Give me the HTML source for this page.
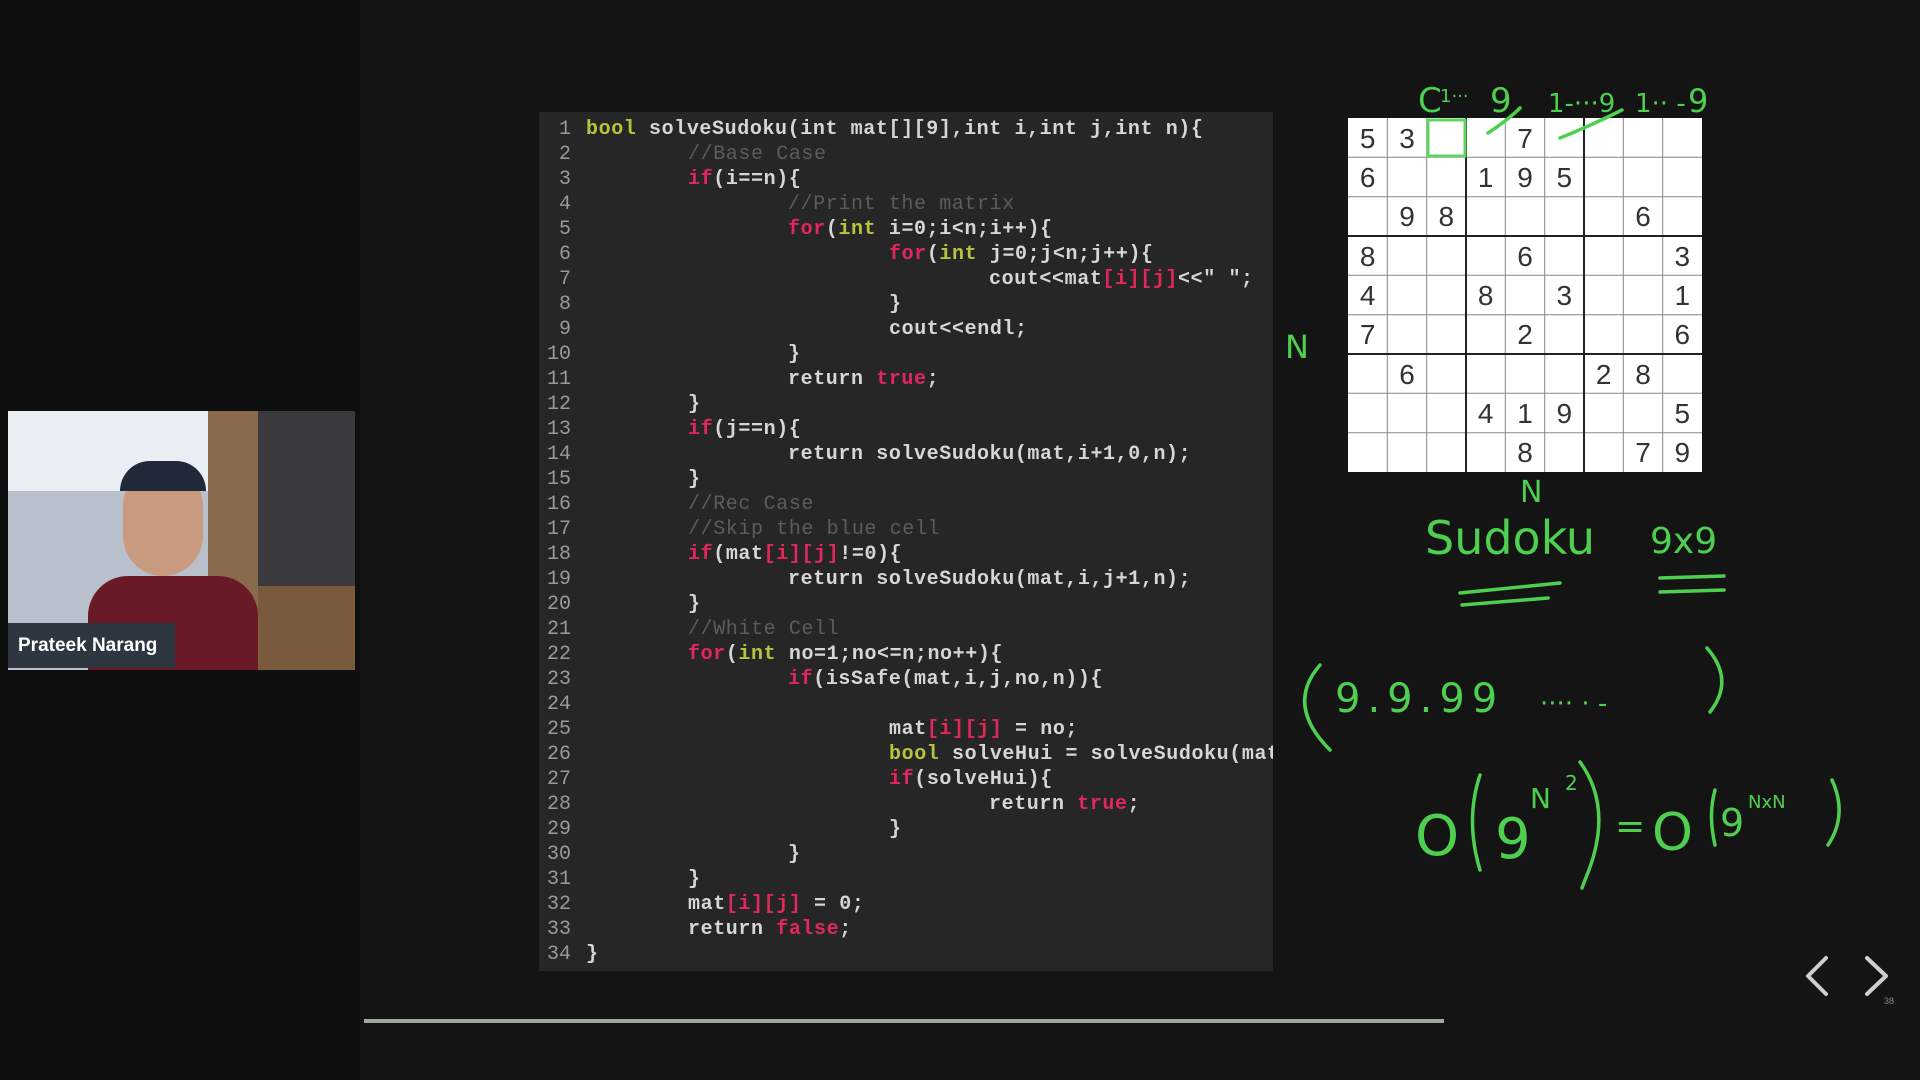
<!DOCTYPE html>
<html><head><meta charset="utf-8"><style>
body{margin:0;width:1920px;height:1080px;background:#141414;position:relative;overflow:hidden;font-family:"Liberation Sans",sans-serif}
.panel{position:absolute;left:539px;top:112px;width:734px;height:859px;background:#262626;overflow:hidden}
.code{position:absolute;left:0;top:5px;font-family:"Liberation Mono",monospace;font-size:20px;font-weight:bold;color:#d6d6d6;white-space:pre;line-height:25px;letter-spacing:0.6px}
.ln{display:inline-block;width:32px;text-align:right;color:#9a9a9a;font-weight:normal;margin-right:15px;letter-spacing:0}
.k{color:#e2275d}.t{color:#b8c43c}.c{color:#5c5c5c;font-weight:normal}
.i1{padding-left:102px}.i2{padding-left:202px}.i3{padding-left:303px}.i4{padding-left:403px}
.grid{position:absolute;left:1348px;top:118px;width:354px;height:354px;background:#fff}
.cam{position:absolute;left:8px;top:411px;width:347px;height:259px;overflow:hidden;background:#6b6e76}
.g{fill:#4fcf4f;font-family:"DejaVu Sans",sans-serif}
</style></head><body>
<div style="position:absolute;left:0;top:0;width:360px;height:1080px;background:#0f0f0f"></div>
<div class="panel"><div class="code"><span class="ln">1</span><span class="t">bool</span> solveSudoku(int mat[][9],int i,int j,int n){
<span class="ln">2</span><span class="i1 c">//Base Case</span>
<span class="ln">3</span><span class="i1"><span class="k">if</span>(i==n){</span>
<span class="ln">4</span><span class="i2 c">//Print the matrix</span>
<span class="ln">5</span><span class="i2"><span class="k">for</span>(<span class="t">int</span> i=0;i&lt;n;i++){</span>
<span class="ln">6</span><span class="i3"><span class="k">for</span>(<span class="t">int</span> j=0;j&lt;n;j++){</span>
<span class="ln">7</span><span class="i4">cout&lt;&lt;mat<span class="k">[i][j]</span>&lt;&lt;" ";</span>
<span class="ln">8</span><span class="i3">}</span>
<span class="ln">9</span><span class="i3">cout&lt;&lt;endl;</span>
<span class="ln">10</span><span class="i2">}</span>
<span class="ln">11</span><span class="i2">return <span class="k">true</span>;</span>
<span class="ln">12</span><span class="i1">}</span>
<span class="ln">13</span><span class="i1"><span class="k">if</span>(j==n){</span>
<span class="ln">14</span><span class="i2">return solveSudoku(mat,i+1,0,n);</span>
<span class="ln">15</span><span class="i1">}</span>
<span class="ln">16</span><span class="i1 c">//Rec Case</span>
<span class="ln">17</span><span class="i1 c">//Skip the blue cell</span>
<span class="ln">18</span><span class="i1"><span class="k">if</span>(mat<span class="k">[i][j]</span>!=0){</span>
<span class="ln">19</span><span class="i2">return solveSudoku(mat,i,j+1,n);</span>
<span class="ln">20</span><span class="i1">}</span>
<span class="ln">21</span><span class="i1 c">//White Cell</span>
<span class="ln">22</span><span class="i1"><span class="k">for</span>(<span class="t">int</span> no=1;no&lt;=n;no++){</span>
<span class="ln">23</span><span class="i2"><span class="k">if</span>(isSafe(mat,i,j,no,n)){</span>
<span class="ln">24</span>
<span class="ln">25</span><span class="i3">mat<span class="k">[i][j]</span> = no;</span>
<span class="ln">26</span><span class="i3"><span class="t">bool</span> solveHui = solveSudoku(mat,i,j+1,n);</span>
<span class="ln">27</span><span class="i3"><span class="k">if</span>(solveHui){</span>
<span class="ln">28</span><span class="i4">return <span class="k">true</span>;</span>
<span class="ln">29</span><span class="i3">}</span>
<span class="ln">30</span><span class="i2">}</span>
<span class="ln">31</span><span class="i1">}</span>
<span class="ln">32</span><span class="i1">mat<span class="k">[i][j]</span> = 0;</span>
<span class="ln">33</span><span class="i1">return <span class="k">false</span>;</span>
<span class="ln">34</span>}</div></div>

<svg class="grid" viewBox="0 0 354 354" width="354" height="354">
<g stroke="#888" stroke-width="1">
<line x1="39.3" y1="0" x2="39.3" y2="354"/><line x1="78.7" y1="0" x2="78.7" y2="354"/><line x1="157.3" y1="0" x2="157.3" y2="354"/><line x1="196.7" y1="0" x2="196.7" y2="354"/><line x1="275.3" y1="0" x2="275.3" y2="354"/><line x1="314.7" y1="0" x2="314.7" y2="354"/>
<line y1="39.3" x1="0" y2="39.3" x2="354"/><line y1="78.7" x1="0" y2="78.7" x2="354"/><line y1="157.3" x1="0" y2="157.3" x2="354"/><line y1="196.7" x1="0" y2="196.7" x2="354"/><line y1="275.3" x1="0" y2="275.3" x2="354"/><line y1="314.7" x1="0" y2="314.7" x2="354"/>
</g>
<g stroke="#222" stroke-width="2">
<line x1="118" y1="0" x2="118" y2="354"/><line x1="236" y1="0" x2="236" y2="354"/><line y1="118" x1="0" y2="118" x2="354"/><line y1="236" x1="0" y2="236" x2="354"/>
</g>
<rect x="80" y="2" width="37" height="36" fill="none" stroke="#5fd45f" stroke-width="3"/>
<g font-family="Liberation Sans,sans-serif" font-size="28" fill="#333" text-anchor="middle">
<text x="19.7" y="30">5</text><text x="59" y="30">3</text><text x="177" y="30">7</text>
<text x="19.7" y="69">6</text><text x="137.7" y="69">1</text><text x="177" y="69">9</text><text x="216.3" y="69">5</text>
<text x="59" y="108">9</text><text x="98.3" y="108">8</text><text x="295" y="108">6</text>
<text x="19.7" y="148">8</text><text x="177" y="148">6</text><text x="334.3" y="148">3</text>
<text x="19.7" y="187">4</text><text x="137.7" y="187">8</text><text x="216.3" y="187">3</text><text x="334.3" y="187">1</text>
<text x="19.7" y="226">7</text><text x="177" y="226">2</text><text x="334.3" y="226">6</text>
<text x="59" y="266">6</text><text x="255.7" y="266">2</text><text x="295" y="266">8</text>
<text x="137.7" y="305">4</text><text x="177" y="305">1</text><text x="216.3" y="305">9</text><text x="334.3" y="305">5</text>
<text x="177" y="344">8</text><text x="295" y="344">7</text><text x="334.3" y="344">9</text>
</g>
</svg>

<svg style="position:absolute;left:0;top:0" width="1920" height="1080">
<g class="g">
<text x="1418" y="112" font-size="34">C</text>
<text x="1440" y="102" font-size="18">1···</text>
<text x="1490" y="112" font-size="34">9</text>
<text x="1548" y="112" font-size="26">1-···9</text>
<text x="1635" y="112" font-size="26">1·· -</text>
<text x="1688" y="112" font-size="32">9</text>
<text x="1285" y="358" font-size="32">N</text>
<text x="1520" y="502" font-size="30">N</text>
<text x="1425" y="554" font-size="46">Sudoku</text>
<text x="1650" y="553" font-size="36">9x9</text>
<text x="1335" y="712" font-size="40" letter-spacing="7">9.9.99</text>
<text x="1540" y="712" font-size="26">····  ·  -</text>
<text x="1415" y="855" font-size="56">O</text>
<text x="1495" y="858" font-size="56">9</text>
<text x="1530" y="808" font-size="28">N</text>
<text x="1565" y="790" font-size="20">2</text>
<text x="1615" y="838" font-size="36">=</text>
<text x="1652" y="850" font-size="52">O</text>
<text x="1720" y="836" font-size="38">9</text>
<text x="1748" y="808" font-size="18">NxN</text>
</g>
<g fill="none" stroke="#4fcf4f" stroke-width="3.5" stroke-linecap="round">
<path d="M1460 593 L1560 583 M1462 605 L1548 598"/>
<path d="M1660 578 L1724 576 M1660 592 L1724 590"/>
<path d="M1320 665 Q1285 705 1330 750"/>
<path d="M1707 648 Q1735 680 1710 712"/>
<path d="M1480 775 Q1465 820 1480 870"/>
<path d="M1580 762 Q1615 810 1585 880 L1582 888"/>
<path d="M1715 790 Q1708 815 1715 845"/>
<path d="M1832 780 Q1848 815 1828 845"/>
<path d="M1488 133 Q1508 120 1520 108 M1560 138 Q1590 126 1622 110"/>
</g>
<g fill="none" stroke="#cfcfcf" stroke-width="4" stroke-linecap="round" stroke-linejoin="round">
<path d="M1826 958 L1808 976 L1826 994"/>
<path d="M1867 958 L1886 976 L1867 994"/>
</g>
<text x="1884" y="1004" font-size="9" fill="#888" font-family="Liberation Sans">38</text>
<rect x="364" y="1019" width="1080" height="4" fill="#9aab98"/>
</svg>

<div class="cam">
<div style="position:absolute;left:0;top:0;width:210px;height:80px;background:#e8eef4"></div>
<div style="position:absolute;left:0;top:80px;width:210px;height:180px;background:#b8c0cc"></div>
<div style="position:absolute;left:200px;top:0;width:50px;height:259px;background:#8a6a4c"></div>
<div style="position:absolute;left:250px;top:0;width:97px;height:180px;background:#3a3a3e"></div>
<div style="position:absolute;left:250px;top:175px;width:97px;height:84px;background:#7a5a3c"></div>
<div style="position:absolute;left:115px;top:55px;width:80px;height:110px;border-radius:40px;background:#c89a80"></div>
<div style="position:absolute;left:112px;top:50px;width:86px;height:30px;border-radius:40px 40px 0 0;background:#20283a"></div>
<div style="position:absolute;left:80px;top:165px;width:170px;height:100px;border-radius:40px 40px 0 0;background:#6a1a26"></div>
<div style="position:absolute;left:0;top:212px;width:167px;height:45px;background:#2e3740;color:#fff;font-weight:bold;font-size:19px;line-height:45px;padding-left:10px;box-sizing:border-box">Prateek Narang</div>
</div>
</body></html>
